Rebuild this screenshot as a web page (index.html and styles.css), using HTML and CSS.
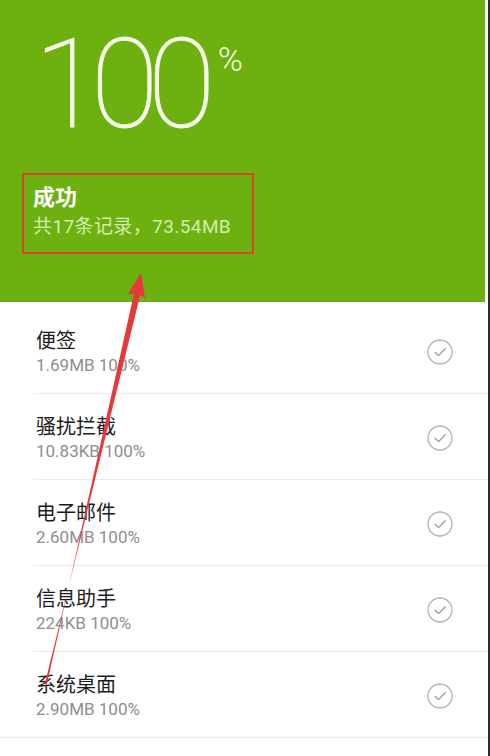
FILE: index.html
```html
<!DOCTYPE html>
<html lang="zh-CN">
<head>
<meta charset="utf-8">
<title>备份结果</title>
<link rel="stylesheet" href="styles.css">
</head>
<body>
<div class="app">
  <header class="header">
    <div class="percent">
      <span class="big">100</span><span class="pct">%</span>
    </div>
    <div class="summary">
      <div class="summary-title">成功</div>
      <div class="summary-sub">共17条记录，73.54MB</div>
    </div>
  </header>
  <ul class="list">
    <li class="row">
      <div class="row-inner">
        <div class="texts"><div class="title">便签</div><div class="sub">1.69MB 100%</div></div>
        <svg class="check" viewBox="0 0 26 26" width="26" height="26"><circle cx="13" cy="13" r="12" fill="none" stroke="#b3b3b3" stroke-width="1.3"/><path d="M8 13.2 L11.6 16.6 L18.2 9.8" fill="none" stroke="#9a9a9a" stroke-width="1.3" stroke-linecap="round" stroke-linejoin="round"/></svg>
      </div>
    </li>
    <li class="row">
      <div class="row-inner">
        <div class="texts"><div class="title">骚扰拦截</div><div class="sub">10.83KB 100%</div></div>
        <svg class="check" viewBox="0 0 26 26" width="26" height="26"><circle cx="13" cy="13" r="12" fill="none" stroke="#b3b3b3" stroke-width="1.3"/><path d="M8 13.2 L11.6 16.6 L18.2 9.8" fill="none" stroke="#9a9a9a" stroke-width="1.3" stroke-linecap="round" stroke-linejoin="round"/></svg>
      </div>
    </li>
    <li class="row">
      <div class="row-inner">
        <div class="texts"><div class="title">电子邮件</div><div class="sub">2.60MB 100%</div></div>
        <svg class="check" viewBox="0 0 26 26" width="26" height="26"><circle cx="13" cy="13" r="12" fill="none" stroke="#b3b3b3" stroke-width="1.3"/><path d="M8 13.2 L11.6 16.6 L18.2 9.8" fill="none" stroke="#9a9a9a" stroke-width="1.3" stroke-linecap="round" stroke-linejoin="round"/></svg>
      </div>
    </li>
    <li class="row">
      <div class="row-inner">
        <div class="texts"><div class="title">信息助手</div><div class="sub">224KB 100%</div></div>
        <svg class="check" viewBox="0 0 26 26" width="26" height="26"><circle cx="13" cy="13" r="12" fill="none" stroke="#b3b3b3" stroke-width="1.3"/><path d="M8 13.2 L11.6 16.6 L18.2 9.8" fill="none" stroke="#9a9a9a" stroke-width="1.3" stroke-linecap="round" stroke-linejoin="round"/></svg>
      </div>
    </li>
    <li class="row last">
      <div class="row-inner">
        <div class="texts"><div class="title">系统桌面</div><div class="sub">2.90MB 100%</div></div>
        <svg class="check" viewBox="0 0 26 26" width="26" height="26"><circle cx="13" cy="13" r="12" fill="none" stroke="#b3b3b3" stroke-width="1.3"/><path d="M8 13.2 L11.6 16.6 L18.2 9.8" fill="none" stroke="#9a9a9a" stroke-width="1.3" stroke-linecap="round" stroke-linejoin="round"/></svg>
      </div>
    </li>
  </ul>
  <svg class="arrow" viewBox="0 0 488 756" width="488" height="756">
    <polygon points="140.6,293.2 134.4,291.8 46.9,684.4 44.9,683.8" fill="#e5393b"/>
    <polygon points="141,273 145,298 136.5,293 127.5,294.5" fill="#e5393b"/>
  </svg>
</div>
</body>
</html>
```
FILE: styles.css
```css
html, body {
  margin: 0;
  padding: 0;
  background: #ffffff;
}

.app {
  position: relative;
  width: 488px;
  height: 756px;
  border-right: 2px solid #2b2b2b;
  background: #ffffff;
  overflow: hidden;
  font-family: "Roboto", "Noto Sans CJK SC", sans-serif;
}

.header {
  width: 485px;
  height: 302px;
  box-sizing: border-box;
  background: #6cb10f;
  padding-top: 23px;
}

.percent {
  display: flex;
  align-items: flex-start;
  padding-left: 34px;
  height: 124px;
}

.big {
  font-family: "Roboto", sans-serif;
  font-weight: 100;
  font-size: 124px;
  line-height: 124px;
  letter-spacing: -11px;
  color: #f7fbe9;
  -webkit-text-stroke: 0.8px #f7fbe9;
}

.pct {
  font-family: "Roboto", sans-serif;
  font-weight: 300;
  font-size: 34px;
  line-height: 34px;
  margin-top: 19px;
  margin-left: 13px;
  color: #f7fbe9;
}

.summary {
  margin-top: 26px;
  margin-left: 22px;
  width: 232px;
  box-sizing: border-box;
  border: 2px solid #d8452c;
  padding: 6px 0 13px 9px;
}

.summary-title {
  font-family: "Noto Sans CJK SC", sans-serif;
  font-weight: 700;
  font-size: 22px;
  line-height: 28px;
  color: #ffffff;
}

.summary-sub {
  margin-top: 6px;
  font-family: "Roboto", "Noto Sans CJK SC", sans-serif;
  font-size: 19px;
  line-height: 24px;
  letter-spacing: 0.4px;
  color: #d6ebb2;
  white-space: nowrap;
}

.list {
  list-style: none;
  margin: 0;
  padding: 6px 0 0 0;
}

.row-inner {
  margin-left: 33px;
  height: 85px;
  border-bottom: 1px solid #ececec;
  display: flex;
  align-items: center;
  justify-content: space-between;
  padding-left: 3px;
  padding-right: 35px;
}

.row.last .row-inner {
  margin-left: 0;
  padding-left: 36px;
}

.texts {
  display: flex;
  flex-direction: column;
  padding-top: 2px;
}

.title {
  font-family: "Noto Sans CJK SC", sans-serif;
  font-size: 20px;
  line-height: 26px;
  color: #1c1c1c;
}

.sub {
  margin-top: 1px;
  font-family: "Roboto", "Noto Sans CJK SC", sans-serif;
  font-size: 17px;
  line-height: 22px;
  color: #8e8e8e;
}

.check {
  display: block;
  margin-top: 2px;
}

.arrow {
  position: absolute;
  left: 0;
  top: 0;
  pointer-events: none;
}
```
